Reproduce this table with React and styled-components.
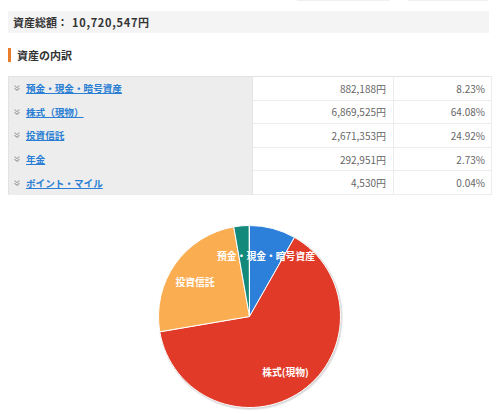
import React from "react";
import styled, { createGlobalStyle } from "styled-components";

const Global = createGlobalStyle`
  html, body { margin: 0; padding: 0; background: #fff; }
  body { font-family: "Noto Sans CJK JP", "Noto Sans", sans-serif; color: #333; }
`;

const Page = styled.div`
  width: 481px;
  margin-left: 8px;
`;

const TopStub = styled.div`
  display: flex;
  justify-content: flex-end;
  gap: 18px;
  height: 1px;
  padding-right: 1px;
`;

const StubCell = styled.div`
  width: ${(p) => p.$w}px;
  border-bottom: 1px solid #f0f0f0;
`;

const TotalBar = styled.div`
  margin-top: 10px;
  height: 22px;
  background: #f4f4f4;
  display: flex;
  align-items: center;
  padding-left: 5px;
  font-size: 11px;
  font-weight: bold;
  color: #333;
`;

const TotalNum = styled.span`
  letter-spacing: 0.7px;
  margin-left: 4px;
`;

const Heading = styled.h2`
  margin: 15px 0 0 0;
  height: 14px;
  display: flex;
  align-items: center;
  border-left: 3px solid #e97d2c;
  padding-left: 6px;
  font-size: 11px;
  font-weight: bold;
  color: #333;
  line-height: 14px;
`;

const Table = styled.table`
  margin-top: 14px;
  width: 481px;
  border-collapse: collapse;
  border: 1px solid #e2e2e2;
  table-layout: fixed;
`;

const Row = styled.tr`
  height: 23.6px;
  border-bottom: 1px solid #ececec;
`;

const LabelCell = styled.td`
  width: 238px;
  background: #ededed;
  padding: 0 0 0 5px;
  border-right: 1px solid #e4e4e4;
  vertical-align: middle;
`;

const NumCell = styled.td`
  width: ${(p) => p.$w}px;
  text-align: right;
  padding: 0 ${(p) => p.$pr}px 0 0;
  font-size: 10px;
  color: #666;
  border-right: 1px solid #ececec;
  vertical-align: middle;
  white-space: nowrap;
`;

const LabelInner = styled.div`
  display: flex;
  align-items: center;
  gap: 6px;
`;

const Link = styled.a`
  font-size: 9.6px;
  font-weight: bold;
  color: #2a7fd4;
  text-decoration: underline;
  cursor: pointer;
`;

const Chevron = () => (
  <svg width="6" height="6" viewBox="0 0 6 6">
    <polyline points="0.5,0.6 3,2.6 5.5,0.6" fill="none" stroke="#a3a3a3" strokeWidth="1.1" />
    <polyline points="0.5,3.2 3,5.2 5.5,3.2" fill="none" stroke="#a3a3a3" strokeWidth="1.1" />
  </svg>
);

const ChartBox = styled.div`
  width: 481px;
  height: 220px;
`;

const rows = [
  { name: "預金・現金・暗号資産", amt: "882,188円", pct: "8.23%", v: 8.23, color: "#2d80d9" },
  { name: "株式（現物）", amt: "6,869,525円", pct: "64.08%", v: 64.08, color: "#e13a29" },
  { name: "投資信託", amt: "2,671,353円", pct: "24.92%", v: 24.92, color: "#fbad52" },
  { name: "年金", amt: "292,951円", pct: "2.73%", v: 2.73, color: "#13897b" },
  { name: "ポイント・マイル", amt: "4,530円", pct: "0.04%", v: 0.04, color: "#8c6bb1" },
];

function Pie() {
  const cx = 241.5;
  const cy = 121.5;
  const r = 91;
  const total = rows.reduce((s, x) => s + x.v, 0);
  let a0 = 0;
  const pt = (a) => [cx + r * Math.sin(a), cy - r * Math.cos(a)];
  const slices = rows.map((d, i) => {
    const a1 = a0 + (d.v / total) * Math.PI * 2;
    const [x0, y0] = pt(a0);
    const [x1, y1] = pt(a1);
    const large = a1 - a0 > Math.PI ? 1 : 0;
    const path = `M${cx},${cy} L${x0},${y0} A${r},${r} 0 ${large} 1 ${x1},${y1} Z`;
    a0 = a1;
    return <path key={i} d={path} fill={d.color} stroke="#fff" strokeWidth="1" strokeLinejoin="round" />;
  });
  const labelStyle = {
    fontFamily: '"Noto Sans CJK JP", sans-serif',
    fontSize: "9.8px",
    fontWeight: "bold",
    fill: "#fff",
  };
  return (
    <svg width="481" height="220" viewBox="0 0 481 220">
      <circle cx={cx + 1} cy={cy + 1.2} r={r + 1.2} fill="rgba(0,0,0,0.10)" />
      <circle cx={cx + 0.5} cy={cy + 0.6} r={r + 0.6} fill="rgba(0,0,0,0.08)" />
      {slices}
      <text x="258" y="64.5" textAnchor="middle" style={labelStyle}>預金・現金・暗号資産</text>
      <text x="277.5" y="181" textAnchor="middle" style={labelStyle}>株式(現物)</text>
      <text x="187" y="91" textAnchor="middle" style={labelStyle}>投資信託</text>
    </svg>
  );
}

export default function App() {
  return (
    <>
      <Global />
      <Page>
        <TopStub>
          <StubCell $w={93} />
          <StubCell $w={80} />
        </TopStub>
        <TotalBar>
          資産総額：<TotalNum>10,720,547円</TotalNum>
        </TotalBar>
        <Heading>資産の内訳</Heading>
        <Table>
          <tbody>
            {rows.map((d) => (
              <Row key={d.name}>
                <LabelCell>
                  <LabelInner>
                    <Chevron />
                    <Link>{d.name}</Link>
                  </LabelInner>
                </LabelCell>
                <NumCell $w={133} $pr={7}>{d.amt}</NumCell>
                <NumCell $w={91} $pr={6}>{d.pct}</NumCell>
              </Row>
            ))}
          </tbody>
        </Table>
        <ChartBox>
          <Pie />
        </ChartBox>
      </Page>
    </>
  );
}
